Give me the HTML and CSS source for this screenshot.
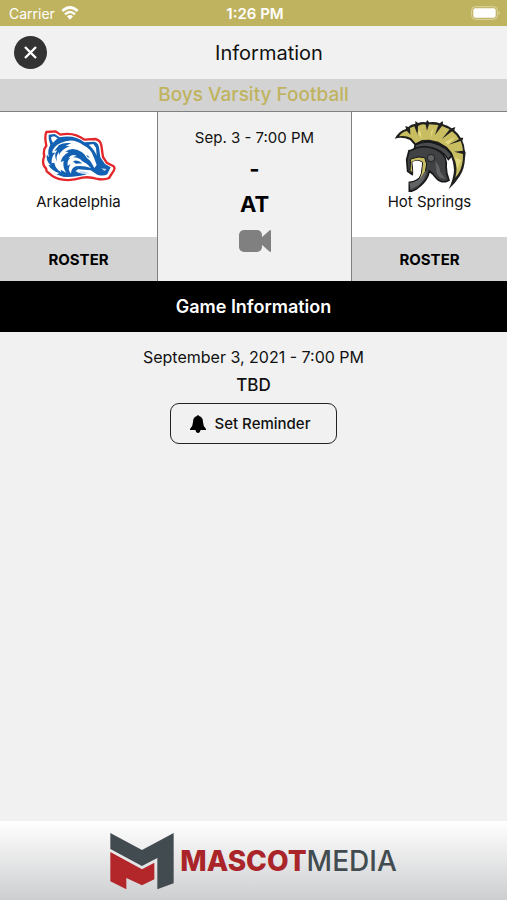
FILE: index.html
```html
<!DOCTYPE html>
<html lang="en">
<head>
<meta charset="utf-8">
<meta name="viewport" content="width=device-width, initial-scale=1">
<title>Information</title>
<link rel="stylesheet" href="styles.css">
</head>
<body>
<div class="status">
  <div class="carrier">
    <span>Carrier</span>
    <svg width="18" height="14" viewBox="0 0 54 42" aria-hidden="true">
      <path d="M4 15 Q27 -6 50 15" fill="none" stroke="#fff" stroke-width="8"/>
      <path d="M12 25 Q27 11 42 25" fill="none" stroke="#fff" stroke-width="7"/>
      <path d="M18 31 Q27 23 36 31 L27 41 Z" fill="#fff"/>
    </svg>
  </div>
  <span class="time">1:26 PM</span>
  <svg class="battery" width="30" height="14" viewBox="0 0 90 42" aria-hidden="true">
    <rect x="2" y="2" width="77" height="38" rx="11" fill="none" stroke="#dcd5a4" stroke-width="3"/>
    <rect x="7" y="7" width="67" height="28" rx="6" fill="#fff"/>
    <path d="M83 14 Q90 21 83 28 Z" fill="#dcd5a4"/>
  </svg>
</div>
<header class="header">
  <button class="close" aria-label="Close">
    <svg width="33" height="33" viewBox="0 0 33 33" aria-hidden="true">
      <path d="M11 11 L22 22 M22 11 L11 22" stroke="#fff" stroke-width="2.4"/>
    </svg>
  </button>
  <h1 class="title">Information</h1>
</header>
<main class="main">
  <h2 class="sport">Boys Varsity Football</h2>
  <section class="match">
    <div class="team">
      <div class="team-info">
        <svg width="90" height="80" viewBox="0 -24 270 240" aria-hidden="true">
          <path d="M37 36 L65 34 L79 44 Q120 35 151 59 L184 57 Q199 60 202 76 L207 111 L218 128 L239 139 Q245 145 236 157 L225 174 Q213 180 191 177 Q165 169 145 173 Q112 183 86 179 Q60 175 48 162 L38 154 Q38 145 30 138 Q24 123 31 109 Q26 91 37 77 Q31 50 37 36Z" fill="#fff" stroke="#e3272b" stroke-width="7" stroke-linejoin="round"/>
          <path d="M44 44 L62 42 L77 52 Q122 43 151 67 L181 65 Q193 68 195 82 L199 112 L213 132 L230 142 L220 163 Q208 170 190 164 L170 151 L132 148 L124 154 L158 163 Q115 174 87 170 L67 163 L76 160 Q52 151 43 135 L50 136 Q34 120 39 104 L45 112 Q39 92 49 74 Q42 57 44 44Z" fill="#1261b2"/>
          <path d="M51 51 L61 49 L71 55 L57 68 Q51 61 51 51Z M80 69 Q116 51 147 75 Q172 86 180 113 L188 135 L181 144 Q166 113 143 96 Q115 78 94 95 L104 96 Q83 108 80 127 L89 122 Q85 143 97 158 L80 149 L81 157 Q64 146 61 128 L53 130 Q51 110 64 98 L54 98 Q58 79 80 69Z" fill="#fff"/>
          <path d="M75 75 Q91 66 112 70 L94 77 L107 78 Q81 89 75 106 L74 96 Q65 109 69 125 Q57 105 70 91 L61 93Z" fill="#1261b2"/>
          <path d="M103 115 Q113 100 128 107 L116 112 Q134 111 144 123 Q158 129 171 144 Q146 135 125 139 Q111 145 111 161 Q98 147 110 132 L101 137 Q98 123 109 114Z M164 74 L178 72 L186 83 L188 107 Q181 88 164 74Z M151 101 Q166 102 171 122 Q158 118 151 101Z" fill="#fff"/>
          <path d="M117 124 Q130 117 145 130 L125 131Z M157 105 Q164 106 167 114 Q159 113 157 105Z" fill="#1261b2"/>
          <path d="M128 157 L146 153 L166 160 L146 162Z M202 145 L218 147 L211 153Z" fill="#c5d9ee"/>
        </svg>
        <span class="name">Arkadelphia</span>
      </div>
      <button class="roster">ROSTER</button>
    </div>
    <div class="score">
      <span class="when">Sep. 3 - 7:00 PM</span>
      <span class="big">-</span>
      <span class="big at">AT</span>
      <svg width="32" height="24" viewBox="0 0 32 24" role="img" aria-label="Video">
        <rect x="0" y="1" width="23" height="22" rx="5" fill="#808080"/>
        <path d="M22 9 L31 1 Q32 1 32 2 V22 Q32 23 31 23 L22 15Z" fill="#808080"/>
      </svg>
    </div>
    <div class="team">
      <div class="team-info">
        <svg width="90" height="80" viewBox="0 0 270 240" aria-hidden="true">
          <path d="M29 80 Q42 56 63 51 L61 42 L70 45 Q79 35 91 36 L91 27 L99 33 Q111 28 123 31 L127 24 L132 31 Q150 28 164 34 L173 27 L174 37 Q188 40 200 49 L211 45 L208 55 Q220 65 227 77 L235 77 L232 86 Q239 99 239 114 L242 122 L240 138 Q239 171 224 193 Q212 213 191 232 Q206 200 207 174 Q205 145 195 127 L180 110 L155 94 L112 89 L91 102 L75 84 Q52 73 29 80Z" fill="#20211f"/>
          <path d="M42 73 Q53 58 66 57 L76 68 L75 48 L88 43 L98 69 L99 42 Q110 35 122 38 L126 56 L132 37 L160 39 L150 69 L171 42 L194 52 L171 81 L201 58 Q215 68 222 82 L191 98 L227 87 Q233 101 234 116 L207 119 L234 126 Q235 162 220 185 L211 197 Q218 169 211 149 L201 123 L186 105 L160 89 L133 83 L111 84 L92 94 L78 78 Q62 70 42 73Z" fill="#c9bd62"/>
          <path d="M97 63 L105 53 L111 80Z M138 59 L146 48 L139 77Z M180 90 L211 74 L189 98Z M210 136 L229 145 L217 171Z" fill="#e1d77d"/>
          <path d="M91 98 Q119 84 151 94 Q190 106 201 131 L190 142 Q171 113 140 108 L109 111 L86 119Z" fill="#4b4c4d" stroke="#171819" stroke-width="5"/>
          <path d="M78 115 L94 108 Q119 98 151 111 Q183 125 184 153 Q181 180 192 205 L182 209 Q164 211 153 197 Q145 186 133 177 Q128 203 105 222 Q92 236 73 239 L73 211 Q96 210 109 192 Q118 177 116 148 L103 137 Q84 137 77 152 L82 188 L68 178 L65 143 L72 116Z" fill="#414243" stroke="#171819" stroke-width="5" stroke-linejoin="round"/>
          <path d="M77 141 Q101 131 119 137 L125 156 L121 179 Q113 196 100 206 L109 184 L113 151 Q98 140 81 151 L84 184 L75 176Z" fill="#c9bd62" stroke="#171819" stroke-width="3"/>
          <path d="M83 150 Q98 142 110 152 L107 182 Q98 203 76 208 L86 188Z" fill="#fff"/>
          <path d="M73 213 Q101 211 116 184 L125 176 Q120 202 101 220 L77 232Z M151 147 Q164 161 166 180 L181 200 Q162 202 154 179Z" fill="#626364"/>
          <circle cx="138" cy="138" r="11" fill="#626365" stroke="#2a2b2c" stroke-width="4"/>
        </svg>
        <span class="name">Hot Springs</span>
      </div>
      <button class="roster">ROSTER</button>
    </div>
  </section>
  <h2 class="bar">Game Information</h2>
  <section class="details">
    <span class="date">September 3, 2021 - 7:00 PM</span>
    <span class="place">TBD</span>
    <button class="reminder">
      <svg width="18" height="18" viewBox="0 0 18 18" aria-hidden="true">
        <path d="M8 1 Q9 -1 10 1 Q14 2 14 7 Q14 11 17 14 V15 H1 V14 Q4 11 4 7 Q4 2 8 1Z M6.500 15 H11.500 Q11 18 9 18 Q7 18 6.500 15Z"/>
      </svg>
      <span>Set Reminder</span>
    </button>
  </section>
</main>
<footer class="sponsor">
  <svg width="64" height="58" viewBox="0 0 192 174" aria-hidden="true">
    <path d="M1 3 L96 54 L191 3 V154 L142 172 V78 L96 102 L1 51Z" fill="#424b50"/>
    <path d="M1 60 L96 112 L133 92 V142 L96 160 L49 138 V172 L1 148Z" fill="#b3272b"/>
  </svg>
  <span class="brand"><span class="brand-strong">MASCOT</span><span class="brand-light">MEDIA</span></span>
</footer>
</body>
</html>
```
FILE: styles.css
```css
* {
  box-sizing: border-box;
}

body {
  margin: 0;
  min-height: 100vh;
  display: flex;
  flex-direction: column;
  background: #f1f1f1;
  color: #111;
  font-family: Inter, "Liberation Sans", sans-serif;
}

h1,
h2 {
  margin: 0;
  font-weight: 400;
}

button {
  font: inherit;
  color: inherit;
  border: 0;
  padding: 0;
  cursor: pointer;
}

svg {
  display: block;
  flex: none;
}

.status {
  display: grid;
  grid-template-columns: 1fr auto 1fr;
  align-items: center;
  height: 26px;
  padding: 0 6px 0 9px;
  background: #c0b35f;
  color: #fff;
  font-size: 14px;
}

.carrier {
  display: flex;
  align-items: center;
  gap: 6px;
}

.time {
  font-size: 15px;
  font-weight: 600;
}

.battery {
  justify-self: end;
}

.header {
  display: flex;
  align-items: center;
  height: 53px;
  padding: 0 16px 0 14px;
}

.close {
  width: 33px;
  height: 33px;
  border-radius: 50%;
  background: #333;
}

.title {
  flex: 1;
  text-align: center;
  font-size: 20px;
}

.sport {
  height: 33px;
  line-height: 32px;
  border-bottom: 1px solid #808080;
  background: #d3d3d3;
  color: #c0b35f;
  text-align: center;
  font-size: 19px;
  font-weight: 500;
}

.match {
  display: grid;
  grid-template-columns: 157fr 195fr 155fr;
}

.team {
  display: flex;
  flex-direction: column;
  background: #fff;
}

.team-info {
  display: flex;
  flex-direction: column;
  align-items: center;
  height: 125px;
}

.name {
  font-size: 15px;
  line-height: 20px;
}

.roster {
  height: 44px;
  background: #d3d3d3;
  color: #000;
  font-size: 15px;
  font-weight: 700;
}

.score {
  display: flex;
  flex-direction: column;
  align-items: center;
  padding-top: 16px;
  border: solid #808080;
  border-width: 0 1px;
}

.when {
  font-size: 15px;
  line-height: 20px;
}

.big {
  font-size: 22px;
  font-weight: 700;
  line-height: 42px;
  color: #000;
}

.at {
  line-height: 28px;
  margin-bottom: 11px;
}

.bar {
  height: 51px;
  line-height: 52px;
  background: #000;
  color: #fff;
  text-align: center;
  font-size: 18px;
  font-weight: 600;
}

.details {
  display: flex;
  flex-direction: column;
  align-items: center;
  padding-top: 15px;
}

.date {
  font-size: 16px;
  line-height: 20px;
}

.place {
  margin: 8px 0;
  font-size: 17px;
  font-weight: 500;
  line-height: 20px;
}

.reminder {
  display: flex;
  align-items: center;
  gap: 8px;
  height: 41px;
  padding: 0 26px 0 18px;
  border: 1px solid #222;
  border-radius: 9px;
  background: transparent;
  font-size: 15px;
  font-weight: 500;
}

.sponsor {
  display: flex;
  align-items: center;
  justify-content: center;
  gap: 6px;
  height: 79px;
  margin-top: auto;
  background: linear-gradient(#fff, #cdced0);
}

.brand {
  font-size: 28px;
  line-height: 32px;
}

.brand-strong {
  color: #a92529;
  font-weight: 800;
}

.brand-light {
  color: #424b50;
  font-weight: 500;
}
```
